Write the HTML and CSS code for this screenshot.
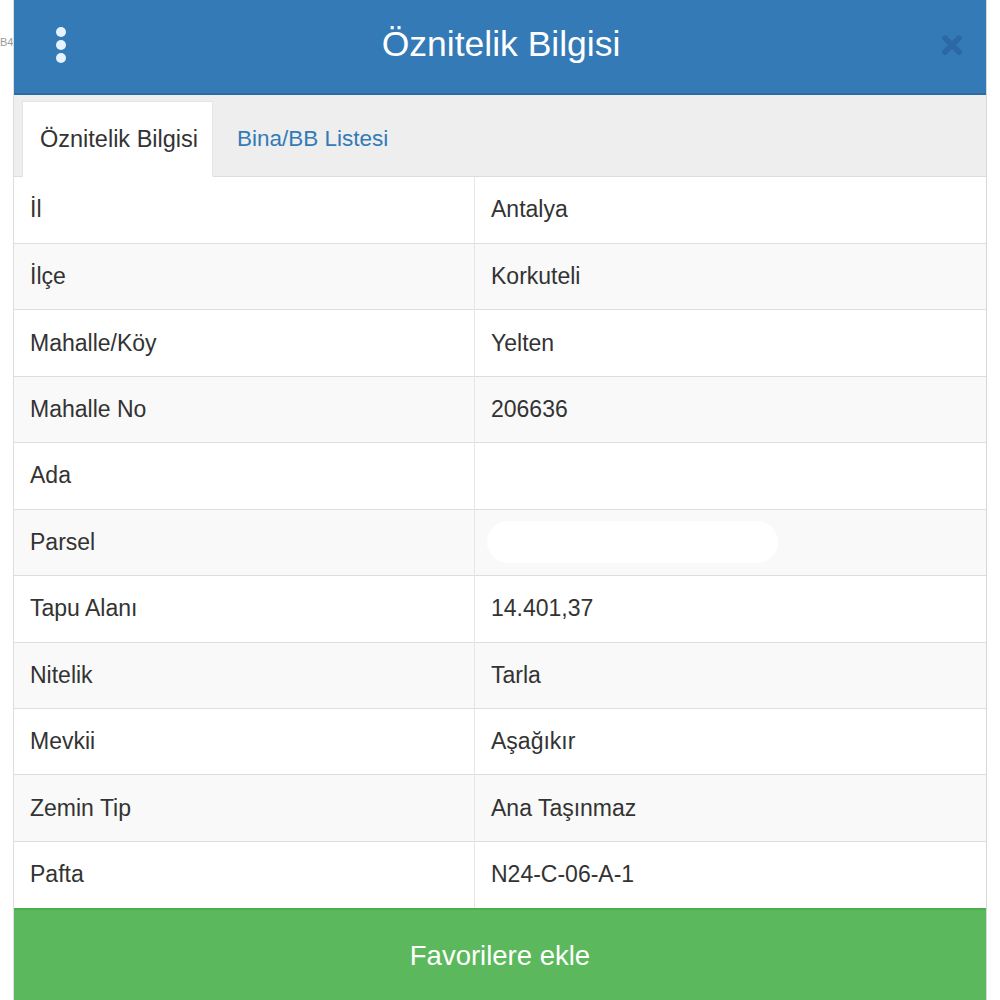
FILE: index.html
```html
<!DOCTYPE html>
<html>
<head>
    <link rel="stylesheet" href="styles.css">
</head>
<body>
    <div class="page">
        <span class="behind">B4</span>
        <div class="panel">
            <div class="panel_head">
                <svg class="kebab" width="14" height="38" viewBox="0 0 14 38">
                    <circle cx="7" cy="6" r="5" fill="#e6f3ff"/>
                    <circle cx="7" cy="19" r="5" fill="#e6f3ff"/>
                    <circle cx="7" cy="32" r="5" fill="#e6f3ff"/>
                </svg>
                <h1>Öznitelik Bilgisi</h1>
                <svg class="close" width="24" height="24" viewBox="0 0 24 24">
                    <path d="M5 5 L19 19 M19 5 L5 19" stroke="#2c68a6" stroke-width="5.5" stroke-linecap="round"/>
                </svg>
            </div>
            <div class="tabs">
                <div class="tab active">Öznitelik Bilgisi</div>
                <div class="tab">Bina/BB Listesi</div>
            </div>
            <table class="attrs">
                <tr><td>İl</td><td>Antalya</td></tr>
                <tr><td>İlçe</td><td>Korkuteli</td></tr>
                <tr><td>Mahalle/Köy</td><td>Yelten</td></tr>
                <tr><td>Mahalle No</td><td>206636</td></tr>
                <tr><td>Ada</td><td></td></tr>
                <tr><td>Parsel</td><td><span class="hidden_val"></span></td></tr>
                <tr><td>Tapu Alanı</td><td>14.401,37</td></tr>
                <tr><td>Nitelik</td><td>Tarla</td></tr>
                <tr><td>Mevkii</td><td>Aşağıkır</td></tr>
                <tr><td>Zemin Tip</td><td>Ana Taşınmaz</td></tr>
                <tr><td>Pafta</td><td>N24-C-06-A-1</td></tr>
            </table>
            <button class="btn_fav">Favorilere ekle</button>
        </div>
    </div>
</body>
</html>
```

FILE: styles.css
```css
html, body { margin: 0; padding: 0; background: #fff; }
body { font-family: "Liberation Sans", Arial, sans-serif; color: #333; }
.page { position: relative; width: 1000px; height: 1000px; overflow: hidden; padding-left: 13px; box-sizing: border-box; }
.behind { position: absolute; left: 0; top: 36px; font-size: 11px; color: #999; }
.panel { position: relative; width: 974px; height: 1000px; border-left: 1px solid #ddd; border-right: 1px solid #d8d8d8; box-sizing: border-box; background: #fff; }
.panel_head { height: 95px; background: #337ab7; border-bottom: 2px solid #2d6ca3; box-sizing: border-box; display: flex; align-items: center; justify-content: space-between; padding: 0 22px 0 40px; }
.panel_head h1 { margin: 0; font-size: 35.5px; font-weight: normal; color: #fff; position: relative; left: -3px; top: -2px; }
.kebab { margin-top: -4px; }
.close { margin-top: -3px; }
.tabs { height: 82px; background: #eee; border-bottom: 1px solid #ddd; box-sizing: border-box; display: flex; align-items: flex-end; padding-left: 8px; }
.tab { height: 76px; display: flex; align-items: center; padding: 0 16px 0 18px; font-size: 22.5px; color: #337ab7; margin-bottom: -1px; }
.tab.active { background: #fff; color: #333; width: 191px; box-sizing: border-box; border: 1px solid #e4e4e4; border-bottom-color: #fff; margin-right: 6px; padding-left: 17px; font-size: 23.5px; white-space: nowrap; }
.attrs { width: 100%; border-collapse: collapse; font-size: 23px; }
.attrs tr { height: 66.45px; }
.attrs tr:nth-child(even) { background: #f9f9f9; }
.attrs td { border-top: 1px solid #ddd; padding: 0 16px; vertical-align: middle; }
.attrs td:first-child { width: 428px; border-right: 1px solid #e6e6e6; }
.attrs tr:first-child td { border-top: none; }
.hidden_val { display: block; width: 291px; height: 42px; border-radius: 21px; background: #fff; margin-left: -4px; }
.btn_fav { display: block; width: 100%; height: 95px; border: none; border-top: 2px solid #4cae4c; background: #5cb85c; color: #fff; font-family: "Liberation Sans", Arial, sans-serif; font-size: 27.5px; padding: 0; cursor: pointer; }
```
